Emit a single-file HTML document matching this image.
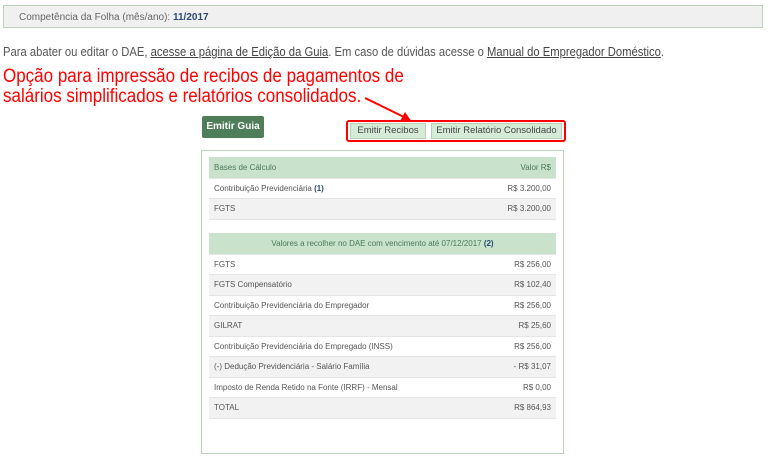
<!DOCTYPE html>
<html><head><meta charset="utf-8"><style>
*{margin:0;padding:0;box-sizing:border-box}
body{width:768px;height:458px;background:#fff;font-family:"Liberation Sans",Arial,sans-serif;position:relative;overflow:hidden;color:#555}
.abs{position:absolute}
.top{left:3px;top:5px;width:760px;height:23px;background:#f0f0f0;border:1px solid #bcd3bc;font-size:10px;color:#666;padding:6px 0 0 15px}
.top b{color:#2d4a73}
.p{left:3px;top:45px;font-size:12.5px;color:#555;white-space:nowrap;transform:scaleX(0.9);transform-origin:0 0}
.p u{color:#444}
.red{left:3px;color:#f00;font-size:19px;white-space:nowrap;transform:scaleX(0.895);transform-origin:0 0}
.guia{left:202px;top:116px;width:62px;height:22px;background:#4d7d59;color:#fff;font-size:10px;font-weight:bold;text-align:center;padding-top:5px;border-radius:2px}
.rbox{left:346px;top:120px;width:220px;height:22px;border:2px solid #f00;border-radius:3px}
.btn{top:123px;height:16px;background:#d6ead8;border:1px solid #b3cfb6;font-size:9.5px;color:#444;text-align:center;line-height:14px}
.outer{left:201px;top:150px;width:363px;height:304px;border:1px solid #b9d6bc}
table{position:absolute;left:209px;width:347px;border-collapse:collapse;font-size:8px;color:#555}
td{height:20.5px;padding:0 5px;border-bottom:1px solid #e4e4e4}
td.r{text-align:right}
tr.h td{background:#c8e2cc;color:#4e7a58;height:21px}
tr:nth-child(odd):not(.h) td{background:#f2f2f2}
</style></head><body>
<div class="abs top">Competência da Folha (mês/ano): <b>11/2017</b></div>
<div class="abs p">Para abater ou editar o DAE, <u>acesse a página de Edição da Guia</u>. Em caso de dúvidas acesse o <u>Manual do Empregador Doméstico</u>.</div>
<div class="abs red" style="top:66px">Opção para impressão de recibos de pagamentos de</div>
<div class="abs red" style="top:86px">salários simplificados e relatórios consolidados.</div>
<svg class="abs" style="left:360px;top:92px" width="60" height="35"><line x1="5" y1="6" x2="46" y2="26" stroke="#f00" stroke-width="2"/><polygon points="52,30 40,29 45,20" fill="#f00"/></svg>
<div class="abs guia">Emitir Guia</div>
<div class="abs rbox"></div>
<div class="abs btn" style="left:350px;width:76px">Emitir Recibos</div>
<div class="abs btn" style="left:431px;width:131px">Emitir Relatório Consolidado</div>
<div class="abs outer"></div>
<table style="top:157px">
<tr class="h"><td>Bases de Cálculo</td><td class="r">Valor R$</td></tr>
<tr><td>Contribuição Previdenciária <b style="color:#2d4a73">(1)</b></td><td class="r">R$ 3.200,00</td></tr>
<tr><td>FGTS</td><td class="r">R$ 3.200,00</td></tr>
</table>
<table style="top:233px">
<tr class="h"><td colspan="2" style="text-align:center">Valores a recolher no DAE com vencimento até 07/12/2017 <b style="color:#2d4a73">(2)</b></td></tr>
<tr><td>FGTS</td><td class="r">R$ 256,00</td></tr>
<tr><td>FGTS Compensatório</td><td class="r">R$ 102,40</td></tr>
<tr><td>Contribuição Previdenciária do Empregador</td><td class="r">R$ 256,00</td></tr>
<tr><td>GILRAT</td><td class="r">R$ 25,60</td></tr>
<tr><td>Contribuição Previdenciária do Empregado (INSS)</td><td class="r">R$ 256,00</td></tr>
<tr><td>(-) Dedução Previdenciária - Salário Família</td><td class="r">- R$ 31,07</td></tr>
<tr><td>Imposto de Renda Retido na Fonte (IRRF) - Mensal</td><td class="r">R$ 0,00</td></tr>
<tr><td>TOTAL</td><td class="r">R$ 864,93</td></tr>
</table>
</body></html>
